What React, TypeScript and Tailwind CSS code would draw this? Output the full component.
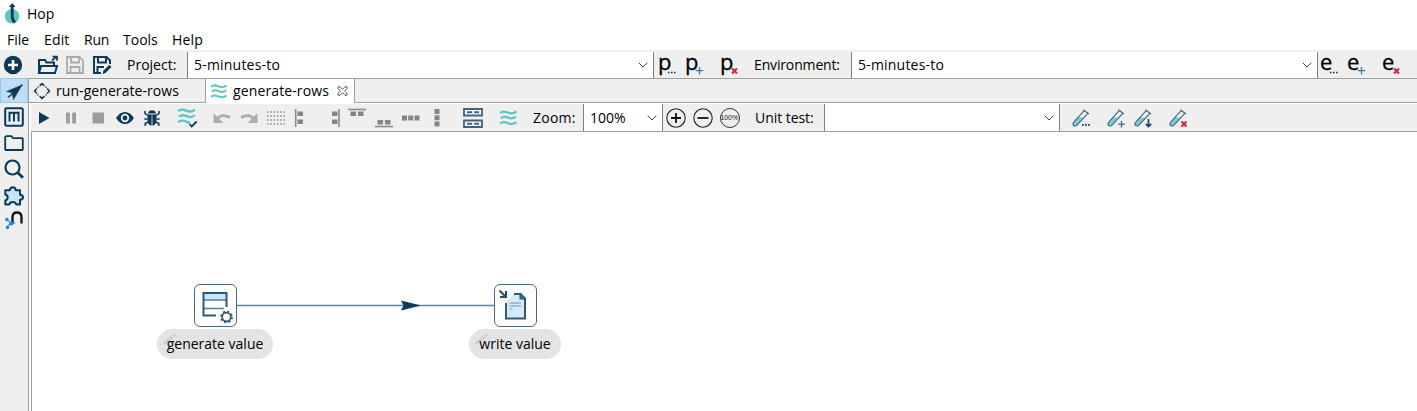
import React from "react";

const NAVY = "#0e3a5a";
const TEAL = "#5fc4c4";
const GREY = "#9c9c9c";

type IconProps = { children: React.ReactNode; box?: string; className?: string };

function Icon({ children, box = "0 0 20 20", className = "h-5 w-5" }: IconProps) {
  return (
    <svg viewBox={box} className={`${className} block shrink-0`} fill="none">
      {children}
    </svg>
  );
}

function Slot({ children, className = "w-[27px]" }: { children?: React.ReactNode; className?: string }) {
  return <div className={`flex h-full shrink-0 items-center justify-center ${className}`}>{children}</div>;
}

function Waves({ className = "h-5 w-5" }: { className?: string }) {
  return (
    <Icon className={className}>
      <path
        d="M2 5c3-2.400 5-1.800 7.500-.6s5.500 1.600 9-.9M3 10.200c3-2.400 4.500-1.800 7-.6s5 1.600 8-.9M2 15.700c3-2.400 5-1.800 7.500-.6s5.500 1.600 9-.9"
        stroke={TEAL}
        strokeWidth="2.200"
      />
    </Icon>
  );
}

function Chevron() {
  return (
    <Icon box="0 0 10 6" className="h-[6px] w-[10px]">
      <path d="M.7.7 5 5 9.300.7" stroke="#444" strokeWidth="1" />
    </Icon>
  );
}

function Combo({ text, className, textClass = "" }: { text: string; className: string; textClass?: string }) {
  return (
    <div className={`flex shrink-0 items-center justify-between border-x border-[#808080] bg-white pl-[6px] pr-[5px] ${className}`}>
      <span className={textClass}>{text}</span>
      <Chevron />
    </div>
  );
}

const DOTS = <path d="M10 17.500h1.500M13 17.500h1.500M16 17.500h1.500" stroke="#222" strokeWidth="1.500" />;
const PLUS = <path d="M14.500 12v7.500M10.800 15.700h7.500" stroke="#4f7590" strokeWidth="1.300" />;
const CROSS = <path d="m12 13.500 5 5m0-5-5 5" stroke="#dc1f3d" strokeWidth="2" />;

function LetterIcon({ letter, className, badge }: { letter: "p" | "e"; className: string; badge: React.ReactNode }) {
  return (
    <div className={`relative h-[26px] shrink-0 ${className}`}>
      <span className="block h-[26px] pl-[1px] font-['Open_Sans',sans-serif] text-[22px] leading-[20px] text-black [-webkit-text-stroke:0.300px_black]">
        {letter}
      </span>
      <svg viewBox="0 0 20 20" className="absolute top-[4px] left-[1px] h-5 w-5" fill="none">
        {badge}
      </svg>
    </div>
  );
}

function Tube({ children }: { children: React.ReactNode }) {
  return (
    <Icon>
      <path d="m2.600 14 4-4.700 5.400.2-5.700 7.300q-2 1.700-3.500.7-1.300-1.300-.2-3.500" fill="#79cbd1" />
      <path d="M12.300 1.800 18 6M13 2.800 2.600 14.200q-1.300 2.300 0 3.300 1.800 1 3.700-.7L16.700 5.400" stroke="#3d637d" strokeWidth="1.100" />
      {children}
    </Icon>
  );
}

function TitleBar() {
  return (
    <div className="flex h-[27px] shrink-0 items-center pl-[4px]">
      <Icon box="0 0 16 22" className="h-[22px] w-4">
        <ellipse cx="8" cy="13.300" rx="7.200" ry="7.300" fill={TEAL} />
        <path d="M8.200 3v10.500q.2 4 2.800 6" stroke={NAVY} strokeWidth="2.800" />
        <path d="M8.300 0 5 4h6.500z" fill={NAVY} />
      </Icon>
      <span className="ml-[7px]">Hop</span>
    </div>
  );
}

function MenuBar() {
  return (
    <div className="flex h-[23px] shrink-0 items-center pt-[2px] pl-[7px]">
      <span className="w-[37px]">File</span>
      <span className="w-[40px] tracking-[0.150px]">Edit</span>
      <span className="w-[39px] tracking-[-0.200px]">Run</span>
      <span className="w-[49px]">Tools</span>
      <span className="tracking-[0.200px]">Help</span>
    </div>
  );
}

function MainToolbar() {
  return (
    <div className="flex h-[28px] shrink-0 items-center bg-[#efefef]">
      <Slot className="w-[25px] pt-[2px]">
        <Icon>
          <circle cx="10" cy="10" r="9.200" fill={NAVY} />
          <path d="M10 5v10M5 10h10" stroke="#fff" strokeWidth="2.600" />
        </Icon>
      </Slot>
      <Slot className="ml-[9px] w-[27px] pt-[2px]">
        <Icon box="0 0 22 20" className="h-5 w-[22px]">
          <path d="M2 18V5h6l1.500 2.500H13M2 18l2-7h16l-2 7zM12 7.500h5V11" stroke={NAVY} strokeWidth="2" />
          <path d="m15 5.500 4-3.500M15.500 1.500H20v4.300" stroke={NAVY} strokeWidth="1.700" />
        </Icon>
      </Slot>
      <Slot className="w-[27px] pt-[2px]">
        <Icon>
          <path d="M2 2h12.500L18 5.500V18H2zM6 2v5.500h8V2M5.500 18v-6h9v6" stroke="#ababab" strokeWidth="1.800" />
        </Icon>
      </Slot>
      <Slot className="w-[27px] pt-[2px]">
        <Icon>
          <path d="M9 18H2V2h12.500L18 5.500V9M6 2v5.500h8V2M5.500 18v-6H12" stroke={NAVY} strokeWidth="2" />
          <path d="m10.500 19 .8-3.300 6-6 2.200 2.200-6 6z" fill={NAVY} />
        </Icon>
      </Slot>
      <span className="ml-[12px] w-[60px] shrink-0 pt-[2px]">Project:</span>
      <Combo text="5-minutes-to" className="mt-[2px] h-[26px] w-[467px]" textClass="tracking-[0.200px]" />
      <LetterIcon letter="p" className="ml-[3px] w-[27px]" badge={DOTS} />
      <LetterIcon letter="p" className="w-[35px]" badge={PLUS} />
      <LetterIcon letter="p" className="w-[35px]" badge={CROSS} />
      <span className="w-[97px] shrink-0 pt-[2px] tracking-[-0.150px]">Environment:</span>
      <Combo text="5-minutes-to" className="mt-[2px] h-[26px] w-[467px]" textClass="tracking-[0.200px]" />
      <LetterIcon letter="e" className="ml-[1px] w-[27px]" badge={DOTS} />
      <LetterIcon letter="e" className="w-[35px]" badge={PLUS} />
      <LetterIcon letter="e" className="w-[30px]" badge={CROSS} />
    </div>
  );
}

function Sidebar() {
  return (
    <div className="flex w-[28px] shrink-0 flex-col bg-[#efefef]">
      <div className="flex h-[25px] items-center justify-center border border-[#99c9ee] bg-[#bfddf4]">
        <Icon>
          <path d="M18 4 2.500 10.500l5.500 1.200 1.500 6.800z" fill={NAVY} stroke={NAVY} strokeWidth=".6" />
          <path d="M18.500 3.500 4 16.500" stroke={NAVY} strokeWidth="1.300" />
        </Icon>
      </div>
      <div className="flex h-[28px] items-center justify-center">
        <Icon>
          <rect x="1.200" y="1.200" width="17.600" height="17.600" rx="1.500" stroke={NAVY} strokeWidth="2" />
          <path d="M5.500 14.500V5.700h9v8.800M10 5.700v8.800" stroke={NAVY} strokeWidth="2" />
        </Icon>
      </div>
      <div className="flex h-[24px] items-center justify-center">
        <Icon>
          <path d="M1.500 3.200h6l1.500 2h9a.8.800 0 0 1 .8.800v10.200a.8.800 0 0 1-.8.800H2a.8.800 0 0 1-.8-.8V3.200" stroke={NAVY} strokeWidth="1.800" />
        </Icon>
      </div>
      <div className="flex h-[28px] items-center justify-center">
        <Icon>
          <circle cx="8.500" cy="8.500" r="7" stroke={NAVY} strokeWidth="2.200" />
          <path d="m13.500 13.500 5.500 5.200" stroke={NAVY} strokeWidth="2.800" />
        </Icon>
      </div>
      <div className="flex h-[25px] items-center justify-center">
        <Icon>
          <path
            d="M1.300 4.200h4.500C6 2.300 7 1.200 8.800 1.200s2.800 1.100 3 3H16v4.500c2 .2 3 1 3 2.600s-1 2.400-3 2.600v4.600h-3.700c-.5-1.600-1.700-2.500-3.500-2.500s-3 .9-3.500 2.500H1.300v-4c1.600-.5 2.400-1.500 2.400-3s-.8-2.500-2.400-3z"
            fill="#c9e3f7"
            stroke={NAVY}
            strokeWidth="2"
            strokeLinejoin="round"
          />
        </Icon>
      </div>
      <div className="flex h-[25px] items-center justify-center pt-[1px]">
        <Icon>
          <path d="M8.500 12V6q0-4.500 4.500-4.500T17.500 6v6.500" stroke="#111" strokeWidth="2.300" />
          <path d="m3 8.500 4 3.500h4M7 12l-4 4" stroke="#3a8de0" strokeWidth="1.300" />
          <circle cx="2.800" cy="8.500" r="1.700" fill="#2385e8" />
          <circle cx="7.500" cy="12.500" r="2.100" fill="#2385e8" />
          <circle cx="3.500" cy="16.500" r="1.700" fill="#2385e8" />
        </Icon>
      </div>
    </div>
  );
}

function Tabs() {
  return (
    <div className="flex h-[25px] shrink-0 border-t border-[#a0a0a0] bg-[#efefef]">
      <div className="flex w-[177px] items-center border-r border-b border-[#a0a0a0] pl-[4px]">
        <Icon className="h-[18px] w-[18px]">
          <path
            d="M7.300 4.300 10 1.800l2.700 2.500M15.700 7.300l2.500 2.700-2.500 2.700M12.700 15.700 10 18.200l-2.700-2.500M4.300 12.700 1.800 10l2.500-2.700M14 5.200l1 1M14 14.800l1-1M6 14.800l-1-1M5 6.200l1-1"
            stroke={NAVY}
            strokeWidth="1.700"
          />
        </Icon>
        <span className="ml-[5px] tracking-[0.070px]">run-generate-rows</span>
      </div>
      <div className="flex w-[149px] items-center border-r border-[#a0a0a0] bg-white pl-[3px]">
        <Waves className="h-[19px] w-[19px]" />
        <span className="ml-[5px] w-[104px] tracking-[0.120px]">generate-rows</span>
        <Icon box="0 0 11 10" className="h-[10px] w-[11px]">
          <path
            d="M1 .8h2L5.500 3.300 8 .8h2v1.800L7.600 5 10 7.400v1.800H8L5.500 6.700 3 9.200H1V7.400L3.400 5 1 2.600z"
            fill="#fff"
            stroke="#444"
            strokeWidth=".9"
          />
        </Icon>
      </div>
      <div className="flex-1 border-b border-[#a0a0a0]" />
    </div>
  );
}

function PipelineToolbar() {
  return (
    <div className="ml-[2px] flex h-[27px] shrink-0 items-center bg-[#efefef]">
      <Slot className="w-[26px]">
        <Icon><path d="M5 4v12l10.500-6z" fill={NAVY} /></Icon>
      </Slot>
      <Slot>
        <Icon><path d="M5 4.500h3.800v11H5zM11.200 4.500H15v11h-3.800z" fill={GREY} /></Icon>
      </Slot>
      <Slot>
        <Icon><rect x="4.500" y="4.500" width="11.500" height="11" rx="1" fill={GREY} /></Icon>
      </Slot>
      <Slot>
        <Icon>
          <path d="M1 10q3.800-6 9-6t9 6q-3.800 6-9 6t-9-6" fill={NAVY} />
          <circle cx="10" cy="10" r="4.200" fill="#efefef" />
          <circle cx="10" cy="10" r="2.400" fill={NAVY} />
        </Icon>
      </Slot>
      <Slot>
        <Icon>
          <path d="M6 5.500q.5-3.300 4-3.300t4 3.300zM5.500 6.500h9V13q-.8 4.500-4.500 4.500T5.500 13z" fill={NAVY} />
          <path d="M6 7.500 3 5.500V3M14 7.500l3-2V3M5.500 11H2.300M14.500 11h3.200M6 14l-2.800 1.500V18M14 14l2.800 1.500V18" stroke={NAVY} strokeWidth="1.500" />
          <path d="M10 7.500v10" stroke="#efefef" strokeWidth=".8" />
        </Icon>
      </Slot>
      <Slot className="ml-[8px] w-[27px]">
        <Icon>
          <path
            d="M1 3.200c3-2.400 5.500-1.800 8-.6s5.500 1.600 9-.9M2 8.700c3-2.400 5-1.800 7.500-.6s5.500 1.600 8.500-.9M1 14.200c3-2.400 5.500-1.800 8-.6q1.800.9 4 .9"
            stroke={TEAL}
            strokeWidth="2.300"
          />
          <path d="m12.500 16 2.200 2.500 5-5" stroke={NAVY} strokeWidth="1.800" />
        </Icon>
      </Slot>
      <Slot className="ml-[8px] w-[27px]">
        <Icon>
          <path d="M1.500 5v10h10z" fill="#adadad" />
          <path d="M5 11q4.500-6 13-1.500" stroke="#adadad" strokeWidth="2.800" />
        </Icon>
      </Slot>
      <Slot>
        <Icon>
          <path d="M18.500 5v10h-10z" fill="#adadad" />
          <path d="M15 11Q10.500 5 2 9.500" stroke="#adadad" strokeWidth="2.800" />
        </Icon>
      </Slot>
      <Slot>
        <Icon>
          <path d="M1 4h18M1 8h18M1 12h18M1 16h18" stroke="#8c8c8c" strokeWidth="1.500" strokeDasharray="1.500 1.800" />
        </Icon>
      </Slot>
      <Slot className="ml-[1px] w-[27px]">
        <Icon>
          <path d="M1.700 1v18" stroke="#8b8b8b" strokeWidth="1.600" />
          <path d="M3.500 3.500h5.500V8H3.500zM3.500 11.500h5.500V16H3.500z" fill="#858585" />
        </Icon>
      </Slot>
      <Slot>
        <Icon>
          <path d="M18 1v18" stroke="#8b8b8b" strokeWidth="1.600" />
          <path d="M11 3.500h5.500V8H11zM11 11.500h5.500V16H11z" fill="#858585" />
        </Icon>
      </Slot>
      <Slot className="w-[26px]">
        <Icon>
          <path d="M1 1.500h18" stroke="#8b8b8b" strokeWidth="1.600" />
          <path d="M3.500 3.500h5.500V8h-5.500zM11 3.500h5.500V8H11z" fill="#858585" />
        </Icon>
      </Slot>
      <Slot>
        <Icon>
          <path d="M1 18.500h18" stroke="#8b8b8b" strokeWidth="1.600" />
          <path d="M3.500 12h5.500v4.500h-5.500zM11 12h5.500v4.500H11z" fill="#858585" />
        </Icon>
      </Slot>
      <Slot>
        <Icon><path d="M1 7.500h5v5H1zM7.200 7.500h5v5h-5zM13.500 7.500h5v5h-5z" fill="#858585" /></Icon>
      </Slot>
      <Slot className="w-[26px]">
        <Icon><path d="M7.500 1h5v5h-5zM7.500 7.200h5v5h-5zM7.500 13.500h5v5h-5z" fill="#858585" /></Icon>
      </Slot>
      <Slot className="ml-[9px] w-[27px]">
        <Icon>
          <path d="M1 1h18v6.500H1zM1 12.500h18V19H1z" fill="#fff" stroke="#3f6384" strokeWidth="1.800" />
          <path d="M4 4.200h5.200m2 0H16M4 15.700h5.200m2 0H16" stroke="#3f6384" strokeWidth="2" />
        </Icon>
      </Slot>
      <Slot className="ml-[8px] w-[27px]"><Waves /></Slot>
      <span className="ml-[12px] w-[50px] shrink-0 tracking-[0.250px]">Zoom:</span>
      <Combo text="100%" className="h-full w-[80px]" />
      <Slot className="w-[26px]">
        <Icon>
          <circle cx="10" cy="10" r="9.200" stroke="#222" strokeWidth="1.100" />
          <path d="M10 5v10M5 10h10" stroke="#111" strokeWidth="1.800" />
        </Icon>
      </Slot>
      <Slot>
        <Icon>
          <circle cx="10" cy="10" r="9.200" stroke="#222" strokeWidth="1.100" />
          <path d="M4.500 10h11" stroke="#111" strokeWidth="1.800" />
        </Icon>
      </Slot>
      <Slot>
        <div className="flex h-5 w-5 items-center justify-center rounded-full border border-[#333]">
          <span className="scale-x-[0.850] font-['Liberation_Sans',sans-serif] text-[8px] leading-none text-[#222]">100%</span>
        </div>
      </Slot>
      <span className="ml-[12px] w-[69px] shrink-0 tracking-[-0.050px]">Unit test:</span>
      <Combo text="" className="h-full w-[236px]" />
      <Slot className="ml-[7px] w-[27px]">
        <Tube><path d="M11 16.800h1.800M14 16.800h1.800M17 16.800h1.800" stroke="#1c4564" strokeWidth="1.700" /></Tube>
      </Slot>
      <Slot className="ml-[8px] w-[27px]">
        <Tube><path d="M15.500 13v6.500M12.300 16.200h6.500" stroke="#4f7590" strokeWidth="1.400" /></Tube>
      </Slot>
      <Slot>
        <Tube><path d="M15.500 11v7.500m-2.700-2.700 2.700 2.700 2.700-2.700" stroke="#1c4564" strokeWidth="1.700" /></Tube>
      </Slot>
      <Slot className="ml-[8px] w-[27px]">
        <Tube><path d="m13.500 13.500 5 5m0-5-5 5" stroke="#dc1f3d" strokeWidth="2" /></Tube>
      </Slot>
    </div>
  );
}

function NodeLabel({ text, className }: { text: string; className: string }) {
  return (
    <div className={`absolute top-[197px] flex h-[30px] items-center justify-center rounded-full bg-[#e4e4e4] ${className}`}>
      <svg viewBox="0 0 16 14" className="absolute top-[3px] left-[5px] h-[14px] w-4" fill="none">
        <path d="M.5 13 2 9l7-5 2.500 2-7.500 6zM10 3.500l2.500-2 1.700 1.700L12 5z" fill="#d0d0d0" />
      </svg>
      <span className="relative whitespace-nowrap">{text}</span>
    </div>
  );
}

function Canvas() {
  return (
    <div className="relative ml-[2px] flex-1 overflow-hidden border-t border-l border-[#a0a0a0] bg-white">
      <svg viewBox="0 0 258 12" className="absolute top-[168px] left-[205px] h-3 w-[258px]" fill="none">
        <path d="M0 5.500h258" stroke="#6485a0" strokeWidth="1.400" />
        <path d="m164 .5 20 5-20 5 2.500-5z" fill={NAVY} />
      </svg>
      <div className="absolute top-[152px] left-[162px] flex h-[43px] w-[43px] items-center justify-center rounded-[6px] border border-[#476a83] bg-white">
        <Icon box="0 0 34 34" className="h-[34px] w-[34px]">
          <path d="M4.500 4h23v7h-23z" fill="#c9e6fa" />
          <path d="M4.500 11h23M4.500 19.500H25" stroke="#5b7d95" strokeWidth="1.500" />
          <path d="M27.500 18V4h-23v22.500H17" stroke="#315974" strokeWidth="2" />
          <circle cx="27.500" cy="28" r="4.300" stroke="#315974" strokeWidth="1.700" />
          <circle cx="27.500" cy="28" r="5.600" stroke="#315974" strokeWidth="1.600" strokeDasharray="2.200 2.198" />
        </Icon>
      </div>
      <NodeLabel text="generate value" className="left-[125px] w-[116px]" />
      <div className="absolute top-[152px] left-[462px] flex h-[43px] w-[43px] items-center justify-center rounded-[6px] border border-[#476a83] bg-white">
        <Icon box="0 0 34 34" className="h-[34px] w-[34px]">
          <path d="M7 14 15 5h6l5 5.500V29.500H7z" fill="#d2eafb" />
          <path d="M15 5h6.500v4.500H26v20H7V14M21.500 5l4.500 4.500" stroke="#315974" strokeWidth="2" />
          <path d="M10.500 14H22M10.500 17H22M10.500 20h3" stroke="#7694aa" strokeWidth="1.200" />
          <path d="m.5 1.500 6 6M7 2v6H1" stroke="#244e6c" strokeWidth="2" />
        </Icon>
      </div>
      <NodeLabel text="write value" className="left-[437px] w-[92px]" />
    </div>
  );
}

export default function App() {
  return (
    <div className="flex h-[411px] w-[1417px] flex-col overflow-hidden bg-white font-['Open_Sans','Noto_Sans',sans-serif] text-[14px] leading-[18px] text-black">
      <TitleBar />
      <MenuBar />
      <MainToolbar />
      <div className="flex min-h-0 flex-1">
        <Sidebar />
        <div className="flex min-w-0 flex-1 flex-col border-l border-[#a0a0a0]">
          <Tabs />
          <div className="h-[1px] shrink-0" />
          <PipelineToolbar />
          <Canvas />
        </div>
      </div>
    </div>
  );
}
